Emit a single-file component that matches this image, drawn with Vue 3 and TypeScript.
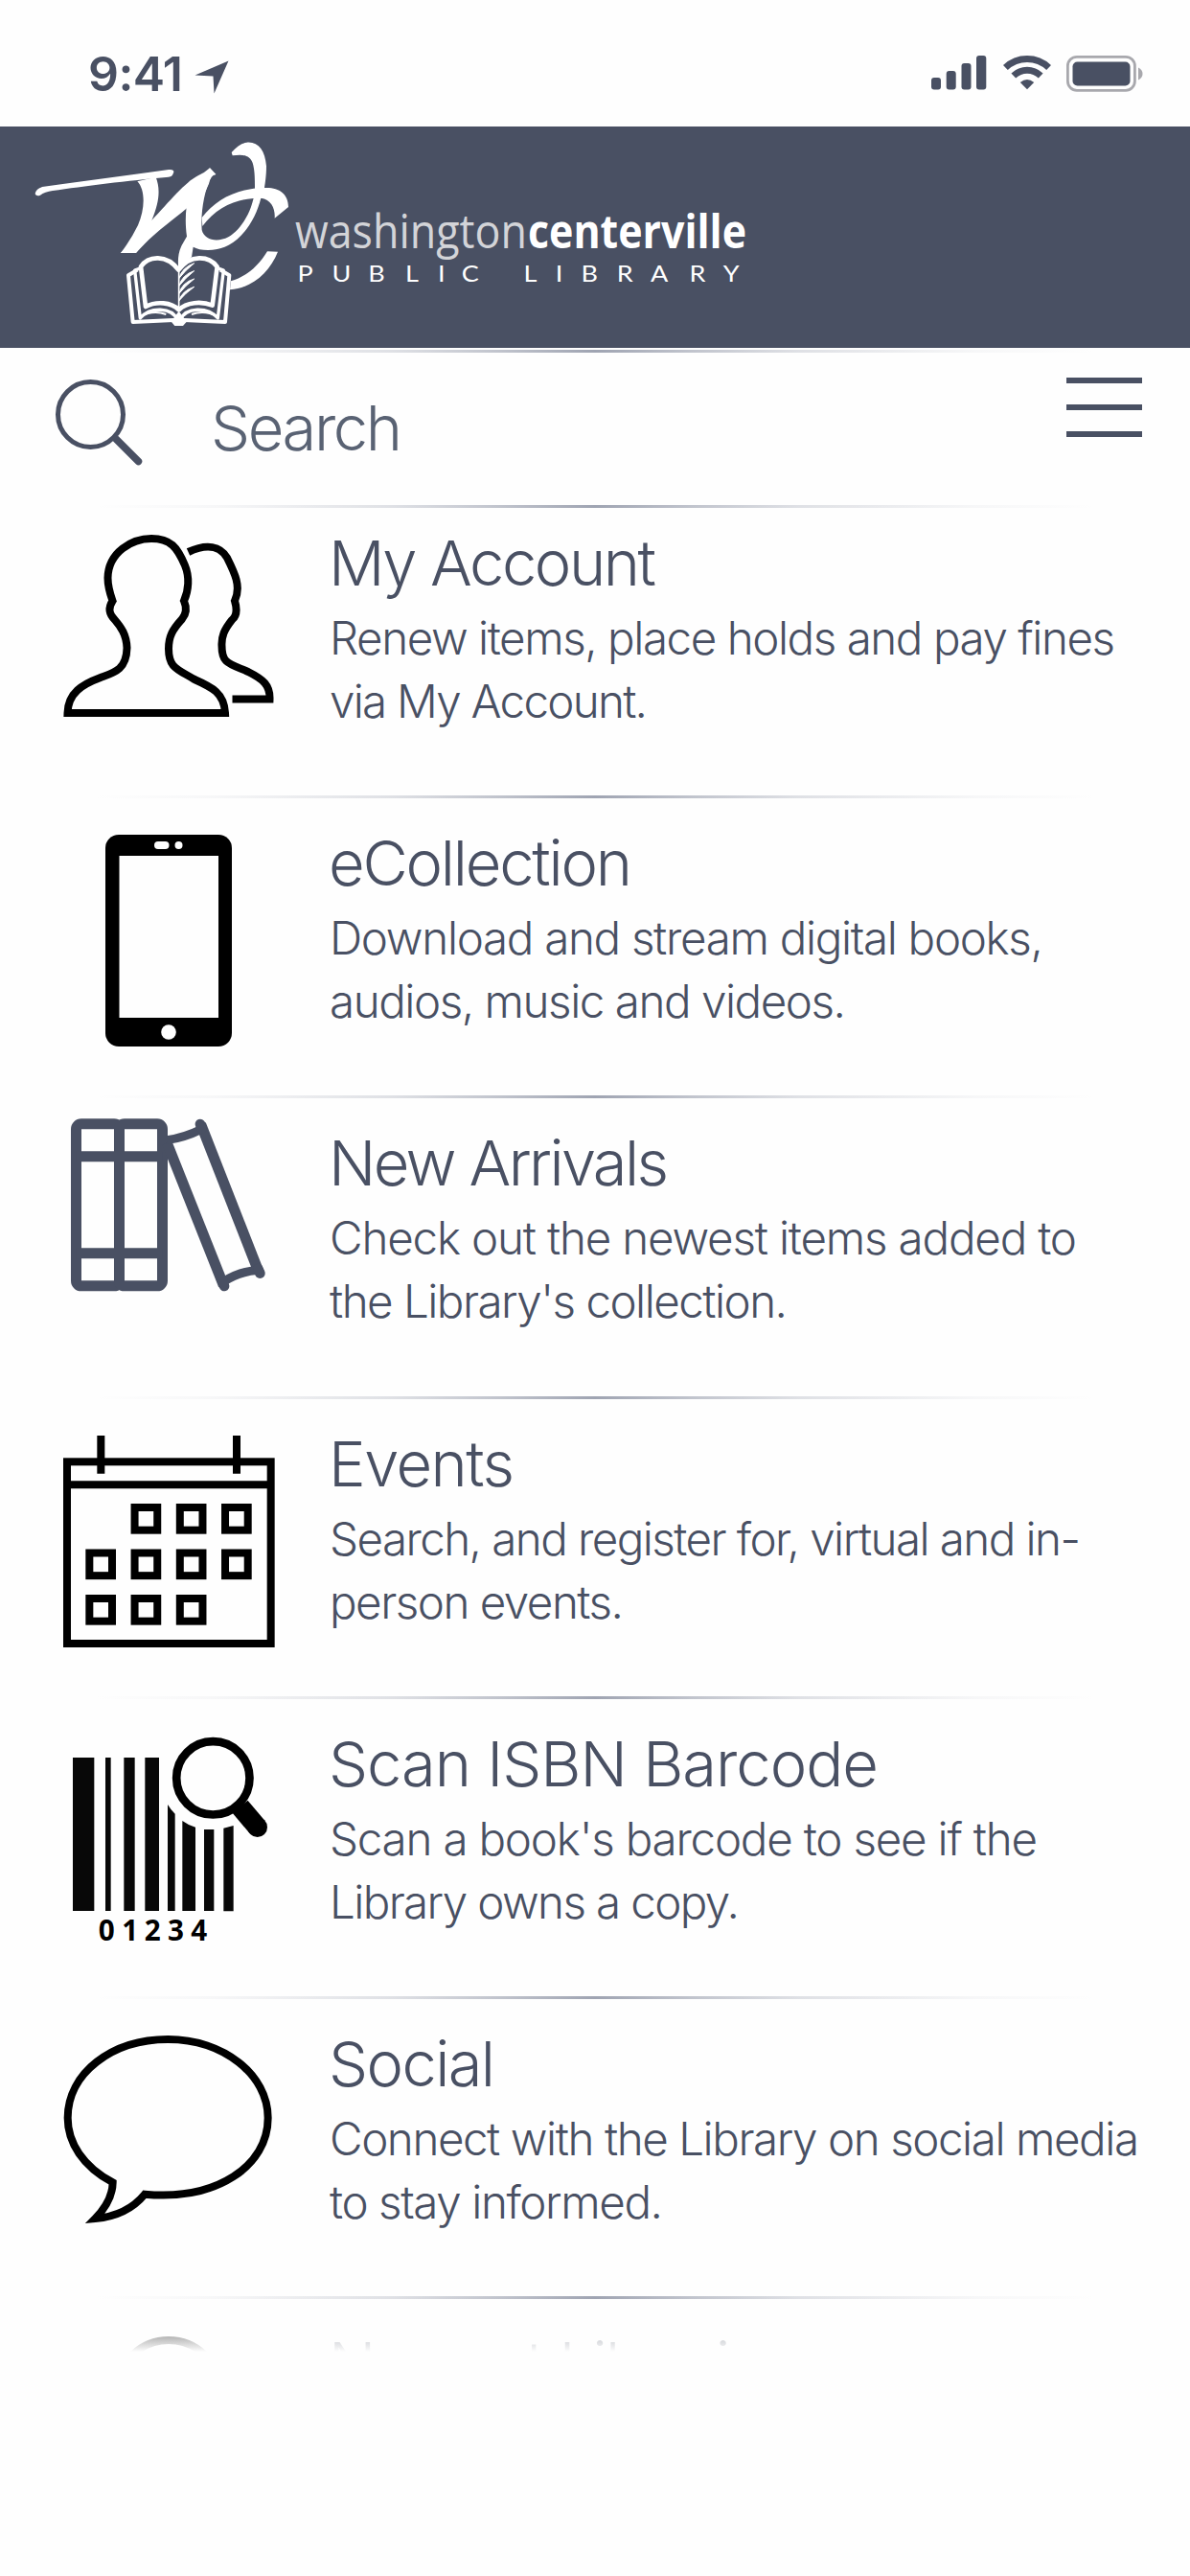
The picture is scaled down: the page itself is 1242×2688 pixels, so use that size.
<script setup lang="ts">
import type { Directive } from 'vue'

interface Line {
  text: string
  width: number
}

interface MenuItem {
  id: string
  title: Line
  lines: Line[]
}

const items: MenuItem[] = [
  {
    id: 'account',
    title: { text: 'My Account', width: 342 },
    lines: [
      { text: 'Renew items, place holds and pay fines', width: 820 },
      { text: 'via My Account.', width: 332 },
    ],
  },
  {
    id: 'ecollection',
    title: { text: 'eCollection', width: 317 },
    lines: [
      { text: 'Download and stream digital books,', width: 745 },
      { text: 'audios, music and videos.', width: 539 },
    ],
  },
  {
    id: 'arrivals',
    title: { text: 'New Arrivals', width: 355 },
    lines: [
      { text: 'Check out the newest items added to', width: 780 },
      { text: "the Library's collection.", width: 478 },
    ],
  },
  {
    id: 'events',
    title: { text: 'Events', width: 194 },
    lines: [
      { text: 'Search, and register for, virtual and in-', width: 784 },
      { text: 'person events.', width: 307 },
    ],
  },
  {
    id: 'scan',
    title: { text: 'Scan ISBN Barcode', width: 574 },
    lines: [
      { text: "Scan a book's barcode to see if the", width: 739 },
      { text: 'Library owns a copy.', width: 428 },
    ],
  },
  {
    id: 'social',
    title: { text: 'Social', width: 174 },
    lines: [
      { text: 'Connect with the Library on social media', width: 845 },
      { text: 'to stay informed.', width: 348 },
    ],
  },
]

const nextTitle: Line = { text: 'Nearest Libraries', width: 487 }

// Tracks a line of text out (or in) so that it takes the given width.
const vFit: Directive<HTMLElement, number> = {
  mounted(el, binding) {
    const count = (el.textContent ?? '').trim().length
    const natural = el.getBoundingClientRect().width
    if (count > 1) el.style.letterSpacing = `${(binding.value - natural) / (count - 1)}px`
  },
}

const days: [number, number][] = [
  [1, 0], [2, 0], [3, 0],
  [0, 1], [1, 1], [2, 1], [3, 1],
  [0, 2], [1, 2], [2, 2],
]
</script>

<template>
  <div class="screen">
    <div class="status">
      <div class="clock">
        <span v-fit="99" class="time">9:41</span>
        <svg class="arrow" width="36" height="36" viewBox="0 0 36 36"><path d="M35.500 0.500L20.500 34.500L19.500 16.500L0.500 15.500Z" /></svg>
      </div>
      <svg class="indicators" width="222" height="40" viewBox="971 57 222 40">
        <g fill="#495063">
          <rect x="972" y="81" width="10" height="12.500" rx="3" />
          <rect x="987.700" y="74" width="10" height="19.500" rx="3" />
          <rect x="1003.500" y="66" width="10" height="27.500" rx="3" />
          <rect x="1019" y="58" width="10.300" height="35.500" rx="3" />
          <path d="M1072 93.300L1064.800 86Q1072 80 1079.200 86Z" />
        </g>
        <g fill="none" stroke="#495063" stroke-width="7">
          <path d="M1049.400 70.500Q1059 61.500 1072 61.500T1094.600 70.500" />
          <path d="M1057.800 79Q1064 73.300 1072 73.300T1086.200 79" />
        </g>
        <rect x="1114.400" y="59.300" width="70" height="35" rx="9.500" fill="none" stroke="#a8a8ad" stroke-width="2.800" />
        <rect x="1119.500" y="64.500" width="60" height="25" rx="5" fill="#495063" />
        <path d="M1188 70.500C1194 73 1194 81 1188 83.500Z" fill="#a8a8ad" />
      </svg>
    </div>

    <header class="brand">
      <svg width="800" height="231" viewBox="0 132 800 231">
        <g transform="translate(20 130) scale(0.33333)">
          <g fill="#fff">
            <path d="M50 217C52 205 60 200 72 195C200 178 340 158 468 141Q485 139 484 149L480 158Q478 163 468 164C340 175 200 193 105 207Q80 210 66 221Q54 226 50 217Z" />
            <path d="M370 178C396 205 394 265 372 315Q350 360 318 402L366 402C375 385 470 305 530 220L600 165C580 210 568 270 572 330C580 362 620 370 655 352C700 325 732 265 738 205C738 160 737 140 731 120C722 95 700 92 668 97L665 87C680 70 695 58 712 56C748 52 770 80 774 130C774 160 770 185 768 198C810 195 843 215 843 258L800 293C802 262 790 235 757 230C740 300 690 378 620 390C590 396 560 392 545 383L540 415Q515 435 499 450Q494 410 508 380Q518 362 525 350C518 300 522 260 530 222L597 136L616 156L600 160C560 150 500 230 415 300C440 240 442 200 428 164Z" />
            <path d="M415 300C470 242 520 180 560 160Q582 150 597 136L616 156Q600 158 594 185L560 260L525 262C480 300 415 345 366 402L318 402Z" />
            <path d="M572 291C615 235 680 200 768 197L760 230C690 228 620 255 574 318Z" />
            <path d="M777 397L810 398C784 462 730 512 660 517L663 490C710 476 748 445 777 397Z" />
            <path d="M482 608L500 584L518 608L527 614L513 630H487L474 614Z" />
          </g>
          <g fill="none" stroke="#fff" stroke-width="14" stroke-linejoin="round">
            <path d="M381 445C404 410 462 405 499 455C536 405 594 410 620 445L605 566C570 552 524 556 500 580C476 556 430 552 396 570Z" />
            <path d="M384 448L362 456L379 606C410 570 478 570 496 612" stroke-width="10" />
            <path d="M618 448L640 456L622 606C590 570 522 570 504 612" stroke-width="10" />
            <path d="M370 455L342 472L356 618L484 612M630 455L658 472L645 618L516 612" stroke-width="12" />
            <path d="M380 600Q420 580 460 594M620 600Q580 580 540 594" stroke-width="6" />
            <path d="M500 455V570" stroke-width="5" />
          </g>
          <path d="M500 482Q510 447 548 434Q520 456 500 482ZM500 506Q510 470 548 458Q520 480 500 506ZM500 530Q510 494 548 483Q520 504 500 530ZM500 552Q510 520 548 508Q520 528 500 552Z" fill="#fff" stroke="#fff" stroke-width="3" />
        </g>
        <g font-family="'Open Sans', 'Noto Sans', sans-serif" font-size="48.500">
          <text x="308" y="259" fill="#d3d4d8" font-weight="400" textLength="242" lengthAdjust="spacingAndGlyphs">washington</text>
          <text x="551" y="259" fill="#fff" font-weight="700" textLength="228" lengthAdjust="spacingAndGlyphs">centerville</text>
        </g>
        <text
          transform="translate(0 293.500) scale(1.2 1)"
          x="258.800 288.800 320.300 352.500 380.800 401.500 431 455.500 483.200 505.400 536.500 565.800 599.600 629"
          y="0"
          class="tagline"
        >PUBLIC LIBRARY</text>
      </svg>
    </header>

    <section class="search">
      <div class="rule"></div>
      <div class="search-row">
        <svg class="lens" width="94" height="94" viewBox="57 394 94 94" fill="none" stroke="#495063">
          <circle cx="94.500" cy="432.500" r="34" stroke-width="5" />
          <path d="M121 458L144.500 481.500" stroke-width="7.500" stroke-linecap="round" />
        </svg>
        <span v-fit="200" class="placeholder">Search</span>
        <div class="burger"><i></i><i></i><i></i></div>
      </div>
    </section>

    <main class="list">
      <article v-for="item in items" :key="item.id" class="item" :class="item.id">
        <div class="rule"></div>
        <div class="row">
          <svg class="icon" width="221" height="221" viewBox="0 0 221 221">
            <g v-if="item.id === 'account'" fill="none" stroke="#000" stroke-width="8">
              <path d="M4.500 186C5 165 20 156 39 149C53 144 66 141 66.500 118C66 104 60 96 54 89C47 82 47 76 51.500 69C49 62 46.500 55 46.500 45C47 18 72 4 92 4C112 4 119 13 127 32C132 44 131 58 126 69C129 76 129 82 124 88C114 99 110 106 110 119C110 139 119 140 137 151C155 159 168 165 169 186Z" />
              <path d="M130.500 18C150 9 164 12 171 24C179 40 186 54 179 69C182 79 181 85 176 89C168 99 165 106 165.500 116C165.500 134 172 134 193 143C209 151 216 157 215.500 171.500H176.500" />
            </g>
            <g v-else-if="item.id === 'ecollection'">
              <rect x="44" width="132" height="221" rx="14" />
              <g fill="#fefefe">
                <rect x="58.500" y="22" width="103.500" height="169" />
                <rect x="95" y="7" width="15.500" height="8" rx="4" />
                <rect x="116.500" y="7" width="8" height="8" rx="4" />
                <circle cx="110" cy="206" r="7.800" />
              </g>
            </g>
            <g v-else-if="item.id === 'arrivals'" transform="translate(-26 -44) scale(0.33333)" fill="none" stroke="#495063" stroke-width="33">
              <rect x="118.500" y="98.500" width="135" height="507" rx="16" />
              <rect x="253.500" y="98.500" width="135" height="507" rx="16" />
              <path d="M118 200H388M118 503.500H388" />
              <path d="M403 158L580 604" stroke-linecap="butt" />
              <path d="M509 100L691 564" stroke-linecap="butt" />
              <path d="M403 149Q460 140 508 116M582 591Q630 560 690 556" stroke-width="27" />
              <path d="M507 99L512 112M688 552L694 566M577 590L582 606" stroke-linecap="round" stroke-width="32" />
            </g>
            <g v-else-if="item.id === 'events'" transform="translate(-26 -28) scale(0.33333)" fill="none" stroke="#000" stroke-width="24">
              <rect x="90" y="166" width="638" height="569" />
              <path d="M90 238H728M196 84V203M621 84V203" />
              <rect v-for="[c, r] in days" :key="`${c}-${r}`" :x="160 + c * 141.700" :y="309 + r * 142.500" width="71" height="71" />
            </g>
            <g v-else-if="item.id === 'scan'" transform="translate(-26 -21) scale(0.33333)">
              <path d="M108 132H175V612H108ZM210 132H227V612H210ZM268 132H302V612H268ZM334 132H378V612H334ZM405 279Q415 296 428 308V612H405ZM451 330Q470 344 492 350V612H451ZM519 357H550V612H519ZM580 353L611 345V613H580Z" fill="#080808" />
              <circle cx="547" cy="196" r="114.500" fill="none" stroke="#000" stroke-width="26" />
              <path d="M632 286L686 350" stroke="#000" stroke-width="62" />
              <circle cx="686" cy="350" r="31" />
              <text x="188 262 332 405 478" y="705" class="digits">01234</text>
            </g>
            <g v-else transform="translate(-26 -24) scale(0.33333)">
              <path d="M233 532C140 482 92 408 92 330C92 190 230 84 406 84C580 84 719 195 719 330C719 480 560 590 333 569Q278 636 178 645Q232 590 233 532Z" fill="none" stroke="#000" stroke-width="24" />
            </g>
          </svg>
          <div class="copy">
            <h2><span v-fit="item.title.width">{{ item.title.text }}</span></h2>
            <p v-for="line in item.lines" :key="line.text"><span v-fit="line.width">{{ line.text }}</span></p>
          </div>
        </div>
      </article>

      <article class="item next">
        <div class="rule"></div>
        <div class="row">
          <svg class="icon" width="221" height="221" viewBox="0 0 221 221">
            <circle cx="110" cy="58" r="54" fill="none" stroke="#000" stroke-width="8" />
          </svg>
          <div class="copy">
            <h2><span v-fit="nextTitle.width">{{ nextTitle.text }}</span></h2>
          </div>
        </div>
        <div class="fade"></div>
      </article>
    </main>
  </div>
</template>

<style>
body {
  margin: 0;
  background: #fefefe;
}
</style>

<style scoped>
.screen {
  width: 1242px;
  height: 2688px;
  overflow: hidden;
  background: #fefefe;
  color: #495063;
  font-family: Inter, 'Liberation Sans', sans-serif;
  font-weight: 300;
}

.status {
  box-sizing: border-box;
  height: 132px;
  padding: 46px 49px 0 92px;
  display: flex;
  justify-content: space-between;
  align-items: flex-start;
}

.clock {
  display: flex;
}

.time {
  margin-top: 1px;
  font-size: 50px;
  font-weight: 600;
  line-height: 60px;
  white-space: nowrap;
}

.arrow {
  margin: 17px 0 0 13px;
  fill: #495063;
}

.indicators {
  margin-top: 11px;
}

.brand {
  height: 231px;
  background: #495063;
}

.brand svg {
  display: block;
}

.tagline {
  fill: #fff;
  font-family: Lato, 'Open Sans', sans-serif;
  font-size: 22.500px;
  font-weight: 400;
}

.search {
  box-sizing: border-box;
  height: 164px;
  padding-top: 2px;
}

.rule {
  height: 3px;
  background: linear-gradient(
    to right,
    rgba(159, 164, 178, 0) 8%,
    rgba(159, 164, 178, 0.08) 18%,
    rgba(159, 164, 178, 0.33) 33%,
    rgba(159, 164, 178, 0.65) 42%,
    rgb(159, 164, 178) 50%,
    rgba(159, 164, 178, 0.65) 58%,
    rgba(159, 164, 178, 0.33) 67%,
    rgba(159, 164, 178, 0.08) 82%,
    rgba(159, 164, 178, 0) 92%
  );
}

.search-row {
  display: flex;
  align-items: flex-start;
  padding: 26px 50px 0 57px;
}

.placeholder {
  margin: 14px 0 0 69px;
  font-size: 65px;
  line-height: 78px;
  color: #596273;
}

.burger {
  margin-left: auto;
  width: 79px;
  display: flex;
  flex-direction: column;
  gap: 22px;
}

.burger i {
  height: 6px;
  background: #495063;
}

.item {
  height: 313.250px;
}

.item.account {
  height: 303px;
}

.row {
  display: flex;
  align-items: flex-start;
  padding: 38px 0 0 66px;
}

.account .row {
  padding-top: 28px;
}

.icon {
  flex: none;
  overflow: visible;
}

.copy {
  margin: -9px 0 0 56px;
  white-space: nowrap;
}

h2 {
  margin: 0 0 6px;
  font-size: 65px;
  line-height: 78px;
  font-weight: 300;
}

p {
  margin: 0 0 0 1px;
  font-size: 47.500px;
  line-height: 66px;
}

.digits {
  font-family: 'Open Sans', 'Noto Sans', sans-serif;
  font-size: 89px;
  font-weight: 700;
}

.next {
  position: relative;
  height: 58px;
  overflow: hidden;
}

.next .row {
  padding-top: 39px;
}

.fade {
  position: absolute;
  inset: 3px 0 0;
  background: linear-gradient(to bottom, rgba(254, 254, 254, 0), #fefefe);
}
</style>
